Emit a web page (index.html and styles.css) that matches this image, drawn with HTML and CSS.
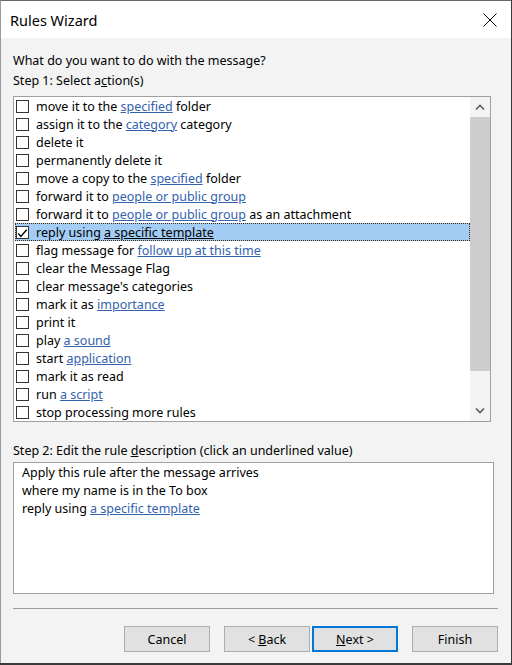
FILE: index.html
```html
<!DOCTYPE html>
<html>
<head>
<meta charset="utf-8">
<link rel="stylesheet" href="styles.css">
</head>
<body>
<div class="window">
  <div class="titlebar">
    <span class="title">Rules Wizard</span>
    <svg class="close" width="14" height="14" viewBox="0 0 14 14"><path d="M0.5 0.5 L13.5 13.5 M13.5 0.5 L0.5 13.5" stroke="#000" stroke-width="1" fill="none"/></svg>
  </div>
  <div class="content">
    <div class="question">What do you want to do with the message?</div>
    <div class="label">Step 1: Select a<u>c</u>tion(s)</div>
    <div class="listbox">
      <div class="items">
        <div class="item"><span class="cb"></span><span>move it to the <a>specified</a> folder</span></div>
        <div class="item"><span class="cb"></span><span>assign it to the <a>category</a> category</span></div>
        <div class="item"><span class="cb"></span><span>delete it</span></div>
        <div class="item"><span class="cb"></span><span>permanently delete it</span></div>
        <div class="item"><span class="cb"></span><span>move a copy to the <a>specified</a> folder</span></div>
        <div class="item"><span class="cb"></span><span>forward it to <a>people or public group</a></span></div>
        <div class="item"><span class="cb"></span><span>forward it to <a>people or public group</a> as an attachment</span></div>
        <div class="item selected"><span class="cb"><svg width="13" height="13" viewBox="0 0 13 13"><path d="M1.5 6.5 L4.5 10 L11.5 2" stroke="#000" stroke-width="1.6" fill="none"/></svg></span><span>reply using <a>a specific template</a></span></div>
        <div class="item"><span class="cb"></span><span>flag message for <a>follow up at this time</a></span></div>
        <div class="item"><span class="cb"></span><span>clear the Message Flag</span></div>
        <div class="item"><span class="cb"></span><span>clear message's categories</span></div>
        <div class="item"><span class="cb"></span><span>mark it as <a>importance</a></span></div>
        <div class="item"><span class="cb"></span><span>print it</span></div>
        <div class="item"><span class="cb"></span><span>play <a>a sound</a></span></div>
        <div class="item"><span class="cb"></span><span>start <a>application</a></span></div>
        <div class="item"><span class="cb"></span><span>mark it as read</span></div>
        <div class="item"><span class="cb"></span><span>run <a>a script</a></span></div>
        <div class="item"><span class="cb"></span><span>stop processing more rules</span></div>
      </div>
      <div class="scrollbar">
        <div class="arrow"><svg width="10" height="6" viewBox="0 0 10 6"><path d="M1 5.5 L5 1.5 L9 5.5" stroke="#606060" stroke-width="1.6" fill="none"/></svg></div>
        <div class="thumb"></div>
        <div class="track"></div>
        <div class="arrow"><svg width="10" height="6" viewBox="0 0 10 6"><path d="M1 0.5 L5 4.5 L9 0.5" stroke="#606060" stroke-width="1.6" fill="none"/></svg></div>
      </div>
    </div>
    <div class="label step2">Step 2: Edit the rule <u>d</u>escription (click an underlined value)</div>
    <div class="desc">
      <div>Apply this rule after the message arrives</div>
      <div>where my name is in the To box</div>
      <div>reply using <a>a specific template</a></div>
    </div>
    <div class="sep"></div>
    <div class="buttons">
      <div class="btn"><span>Cancel</span></div>
      <div class="pair">
        <div class="btn"><span>&lt; <u>B</u>ack</span></div>
        <div class="btn default"><span><u>N</u>ext &gt;</span></div>
      </div>
      <div class="btn"><span>Finish</span></div>
    </div>
  </div>
</div>
</body>
</html>
```
FILE: styles.css
```css
html, body {
  margin: 0;
  padding: 0;
  background: #3a3a3a;
}
body {
  font-family: "Noto Sans", "Liberation Sans", sans-serif;
  font-size: 12.5px;
  color: #000;
}
.window {
  width: 510px;
  height: 662px;
  background: #f3f3f3;
  border-left: 1px solid #9a9a9a;
  border-top: 1px solid #6a6a6a;
  display: flex;
  flex-direction: column;
}
.titlebar {
  height: 37px;
  background: #fff;
  display: flex;
  align-items: center;
  justify-content: space-between;
  padding: 0 14px 0 9px;
  flex: none;
}
.title {
  font-size: 14.5px;
  margin-top: 1px;
}
.close {
  display: block;
  margin-top: 1px;
}
.content {
  padding: 0 13px 0 12px;
  display: flex;
  flex-direction: column;
}
.question {
  line-height: 18px;
  margin-top: 14px;
}
.label {
  line-height: 18px;
  margin-top: 2px;
}
u {
  text-decoration: underline;
}
a {
  color: #3462ac;
  text-decoration: underline;
}
.listbox {
  margin-top: 6px;
  width: 476px;
  height: 324px;
  border: 1px solid #a0a0a0;
  background: #fff;
  display: flex;
}
.items {
  flex: 1;
  display: flex;
  flex-direction: column;
}
.item {
  height: 18px;
  display: flex;
  align-items: center;
  white-space: nowrap;
  margin-left: 1px;
  box-sizing: border-box;
}
.item .cb {
  width: 13px;
  height: 13px;
  box-sizing: border-box;
  border: 1px solid #333;
  background: #fff;
  margin: 0 7px 0 1px;
  flex: none;
  display: flex;
}
.item.selected {
  background: #a3cdf4;
  border: 1px dotted #3a2a10;
}
.item.selected .cb {
  margin-left: 0;
}
.item.selected a {
  color: #000;
}
.scrollbar {
  width: 20px;
  background: #f3f3f3;
  display: flex;
  flex-direction: column;
}
.arrow {
  height: 20px;
  display: flex;
  align-items: center;
  justify-content: center;
}
.thumb {
  height: 254px;
  background: #cdcdcd;
}
.track {
  flex: 1;
}
.step2 {
  margin-top: 20px;
}
.desc {
  margin-top: 2px;
  width: 463px;
  height: 128px;
  border: 1px solid #a0a0a0;
  background: #fff;
  padding: 1px 8px;
  line-height: 18px;
}
.sep {
  margin-top: 14px;
  height: 1px;
  background: #a09aa0;
}
.buttons {
  margin-top: 17px;
  display: flex;
  justify-content: flex-end;
  gap: 14px;
}
.pair {
  display: flex;
  gap: 2px;
}
.btn {
  width: 84px;
  height: 24px;
  background: #e1e1e1;
  border: 1px solid #adadad;
  display: flex;
  align-items: center;
  justify-content: center;
}
.btn.default {
  width: 82px;
  height: 22px;
  border: 2px solid #0078d7;
}
```
